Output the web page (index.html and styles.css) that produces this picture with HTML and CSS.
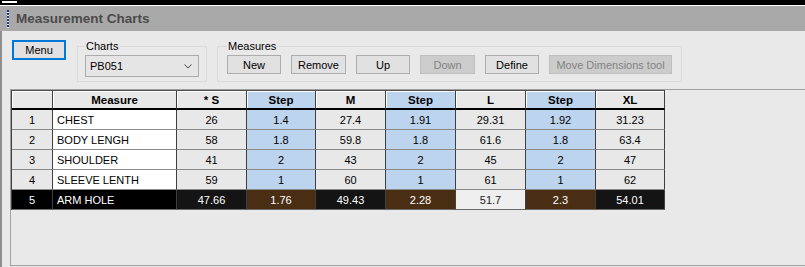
FILE: index.html
```html
<!DOCTYPE html>
<html lang="en">

<head>
    <meta charset="UTF-8">
    <title>Measurement Charts</title>
    <link rel="stylesheet" href="styles.css">
</head>

<body>
    <div class="topbar"><span class="topbar-mark"></span></div>

    <!-- Title strip -->
    <div class="titlebar">
        <span class="grip"></span>
        <span class="title">Measurement Charts</span>
    </div>

    <div class="main">
        <!-- Toolbar -->
        <div class="toolbar">
            <button class="btn btn-menu">Menu</button>

            <fieldset class="group group-charts">
                <legend>Charts</legend>
                <div class="combo">
                    <span>PB051</span>
                    <svg width="8" height="5" viewBox="0 0 8 5"><path d="M0.5 0.5 L4 4 L7.5 0.5" fill="none" stroke="#444" stroke-width="1"/></svg>
                </div>
            </fieldset>

            <fieldset class="group group-measures">
                <legend>Measures</legend>
                <div class="btn-row">
                    <button class="btn">New</button>
                    <button class="btn btn-wide">Remove</button>
                    <button class="btn">Up</button>
                    <button class="btn btn-wide" disabled>Down</button>
                    <button class="btn">Define</button>
                    <button class="btn btn-move" disabled>Move Dimensions tool</button>
                </div>
            </fieldset>
        </div>

        <!-- Grid -->
        <div class="grid-frame">
            <table class="grid">
                <colgroup>
                    <col class="c-num">
                    <col class="c-name">
                    <col class="c-size">
                    <col class="c-step">
                    <col class="c-size">
                    <col class="c-size">
                    <col class="c-size">
                    <col class="c-size">
                    <col class="c-last">
                </colgroup>
                <thead>
                    <tr>
                        <th></th>
                        <th>Measure</th>
                        <th>* S</th>
                        <th class="step">Step</th>
                        <th>M</th>
                        <th class="step">Step</th>
                        <th>L</th>
                        <th class="step">Step</th>
                        <th>XL</th>
                    </tr>
                </thead>
                <tbody>
                    <tr>
                        <td>1</td><td class="name">CHEST</td><td>26</td><td class="step">1.4</td><td>27.4</td><td class="step">1.91</td><td>29.31</td><td class="step">1.92</td><td>31.23</td>
                    </tr>
                    <tr>
                        <td>2</td><td class="name">BODY LENGH</td><td>58</td><td class="step">1.8</td><td>59.8</td><td class="step">1.8</td><td>61.6</td><td class="step">1.8</td><td>63.4</td>
                    </tr>
                    <tr>
                        <td>3</td><td class="name">SHOULDER</td><td>41</td><td class="step">2</td><td>43</td><td class="step">2</td><td>45</td><td class="step">2</td><td>47</td>
                    </tr>
                    <tr>
                        <td>4</td><td class="name">SLEEVE LENTH</td><td>59</td><td class="step">1</td><td>60</td><td class="step">1</td><td>61</td><td class="step">1</td><td>62</td>
                    </tr>
                    <tr class="selected">
                        <td class="sel-num">5</td><td class="name">ARM HOLE</td><td>47.66</td><td class="step">1.76</td><td>49.43</td><td class="step">2.28</td><td class="current">51.7</td><td class="step">2.3</td><td>54.01</td>
                    </tr>
                </tbody>
            </table>
        </div>
    </div>
</body>

</html>
```

FILE: styles.css
```css
/* Base */

* {
    box-sizing: border-box;
}

body {
    margin: 0;
    height: 267px;
    overflow: hidden;
    background-color: #e9e9e9;
    font-family: 'Liberation Sans', Arial, sans-serif;
    font-size: 11px;
    color: #000;
}

/* Window top edge */

.topbar {
    height: 6px;
    padding: 1px 0 0 2px;
    background-color: #000;
    border-bottom: 1px solid #fff;
}

.topbar-mark {
    display: block;
    width: 15px;
    height: 2px;
    background-color: #fff;
}

/* Title strip */

.titlebar {
    height: 25px;
    display: flex;
    align-items: center;
    background-color: #a9a9a9;
}

.grip {
    width: 2px;
    height: 18px;
    margin-left: 7px;
    background: repeating-linear-gradient(to bottom, #203c86 0 2px, #e6ecf5 2px 3px);
}

.title {
    margin-left: 7px;
    font-size: 13.5px;
    font-weight: bold;
    color: #4b4b4b;
}

/* Main area */

.main {
    height: 236px;
    display: flex;
    flex-direction: column;
    border-left: 2px solid #8f8f8f;
}

/* Toolbar */

.toolbar {
    display: flex;
    align-items: flex-start;
    padding: 8px 0 0 10px;
}

.btn {
    height: 19px;
    width: 54px;
    padding: 0;
    font-family: inherit;
    font-size: 11px;
    color: #000;
    background-color: #e1e1e1;
    border: 1px solid #adadad;
    border-radius: 0;
}

.btn:disabled {
    background-color: #cccccc;
    border-color: #bfbfbf;
    color: #838383;
}

.btn-menu {
    margin-top: 1px;
    height: 20px;
    border: 2px solid #0078d7;
}

.btn-wide {
    width: 55px;
}

.btn-move {
    width: 123px;
}

.group {
    margin: 0;
    min-width: 0;
    border: 1px solid #dadada;
}

.group legend {
    padding: 0 1px;
    font-size: 11px;
    line-height: 14px;
}

.group-charts {
    margin-left: 11px;
    padding: 2px 7px 4px;
}

.group-measures {
    margin-left: 10px;
    padding: 2px 9px 7px;
}

.btn-row {
    display: flex;
    gap: 10px;
}

.combo {
    width: 114px;
    height: 22px;
    display: flex;
    align-items: center;
    justify-content: space-between;
    padding: 0 6px 0 4px;
    background-color: #e5e5e5;
    border: 1px solid #acacac;
    font-size: 11px;
}

/* Grid */

.grid-frame {
    flex: 1;
    margin: 7px 0 1px 8px;
    border: 1px solid #a0a0a0;
    border-right: none;
}

.grid {
    border-collapse: separate;
    border-spacing: 0;
    table-layout: fixed;
    width: 654px;
    border-left: 1px solid #404040;
}

.c-num { width: 41px; }
.c-name { width: 124px; }
.c-size { width: 70px; }
.c-step { width: 69px; }
.c-last { width: 69px; }

.grid th,
.grid td {
    padding: 0;
    text-align: center;
    white-space: nowrap;
    overflow: hidden;
    border-right: 1px solid #404040;
}

.grid th {
    height: 20px;
    font-size: 11.5px;
    font-weight: bold;
    background-color: #e8e8e8;
    border-top: 1px solid #505050;
    border-bottom: 2px solid #000;
    box-shadow: inset 1px 1px 0 #fff;
}

.grid td {
    height: 20px;
    background-color: #e8e8e8;
    border-bottom: 1px solid #8a8a8a;
}

.grid .step {
    background-color: #bcd4ee;
}

.grid td.name {
    text-align: left;
    padding-left: 4px;
    background-color: #fff;
}

/* Selected row */

.grid tr.selected td {
    background-color: #141414;
    color: #fff;
    border-bottom-color: #6a6a6a;
}

.grid tr.selected td.sel-num,
.grid tr.selected td.name {
    background-color: #000;
}

.grid tr.selected td.step {
    background-color: #4a2e14;
}

.grid tr.selected td.current {
    background-color: #efefef;
    color: #222;
}
```
